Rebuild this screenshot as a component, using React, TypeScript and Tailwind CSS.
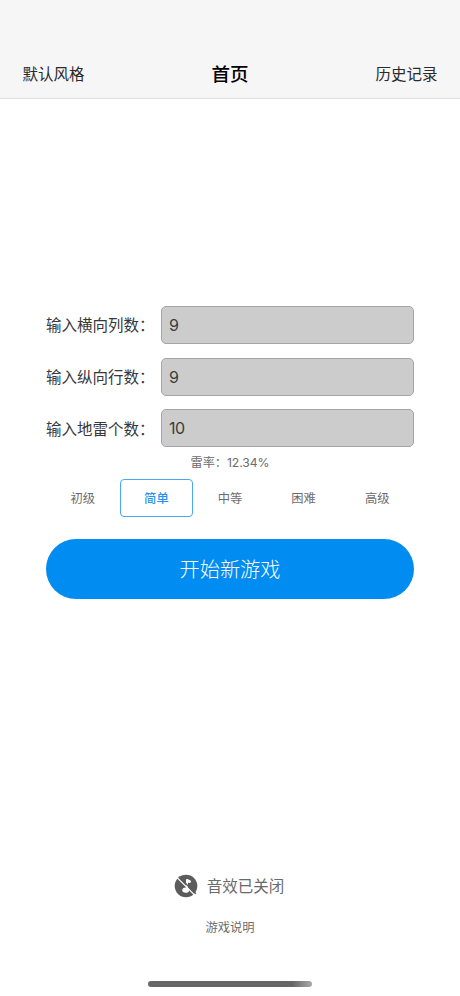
import { useState } from "react";

const levels = [
  { label: "初级", cols: 9, rows: 9, mines: 5 },
  { label: "简单", cols: 9, rows: 9, mines: 10 },
  { label: "中等", cols: 16, rows: 16, mines: 40 },
  { label: "困难", cols: 16, rows: 30, mines: 99 },
  { label: "高级", cols: 24, rows: 30, mines: 180 },
];

function Field({
  label,
  value,
  onChange,
}: {
  label: string;
  value: number;
  onChange: (value: number) => void;
}) {
  return (
    <label className="flex h-[38px] items-center">
      <span className="w-[115px] shrink-0 whitespace-nowrap pt-[2px] text-[15.5px] text-[#383838]">
        {label}
        <span>：</span>
      </span>
      <input
        inputMode="numeric"
        value={value}
        onChange={(e) => onChange(Number(e.target.value) || 0)}
        className="h-[38px] w-0 flex-1 rounded-[5px] border border-[#a5a5a5] bg-[#ccc] px-[7px] text-[16px] tracking-[-0.4px] text-[#3c3c3c] outline-none"
      />
    </label>
  );
}

function MutedIcon() {
  return (
    <svg viewBox="0 0 24 24" className="h-6 w-6">
      <circle cx="12" cy="12" r="11.3" fill="#5c5c5c" />
      <path d="M12 5.6q.4-1 1.4-.6l2.8 1.3q1.1.6.7 1.7t-1.7.9l-1.2-.3v5.6q1.5.6 1.3 2.2c-.3 1.6-1.7 2.3-3.6 2.3-2.1 0-3.5-.9-3.5-2.5 0-1.7 1.6-2.7 3.8-2.6z" fill="#fff" />
      <path d="M4.9 2.7l17 17" stroke="#5c5c5c" strokeWidth="1.4" />
      <path d="M3.4 3.9l17 17" stroke="#fff" strokeWidth="1.3" />
    </svg>
  );
}

export default function App() {
  const [active, setActive] = useState(1);
  const [cols, setCols] = useState(9);
  const [rows, setRows] = useState(9);
  const [mines, setMines] = useState(10);

  // truncated to two decimals, not rounded
  const total = cols * rows;
  const rate = total ? (Math.floor((mines / total) * 10000) / 100).toFixed(2) : "0.00";

  const pick = (i: number) => {
    setActive(i);
    setCols(levels[i].cols);
    setRows(levels[i].rows);
    setMines(levels[i].mines);
  };

  return (
    <div className="flex h-[996px] w-[460px] flex-col bg-white font-['Inter','Noto_Sans_CJK_SC',sans-serif]">
      <header className="flex h-[99px] shrink-0 items-end border-b border-[#dfdfdf] bg-[#f7f6f7] px-[22.5px]">
        <div className="grid h-[48px] w-full grid-cols-3 items-center pt-px">
          <button type="button" className="pt-px text-left text-[15.5px] text-[#2a2a2a]">默认风格</button>
          <h1 className="text-center text-[18.5px] font-medium text-black">首页</h1>
          <button type="button" className="pt-px text-right text-[15.5px] text-[#2a2a2a]">历史记录</button>
        </div>
      </header>

      <main className="flex flex-1 flex-col px-[46px] pt-[207px]">
        <div className="flex flex-col gap-[13.7px]">
          <Field label="输入横向列数" value={cols} onChange={setCols} />
          <Field label="输入纵向行数" value={rows} onChange={setRows} />
          <Field label="输入地雷个数" value={mines} onChange={setMines} />
        </div>

        <p className="mt-[7px] text-center text-[12.2px] leading-[18px] tracking-[-0.08px] text-[#6c6c6c]">雷率：{rate}%</p>

        <div className="mt-[7px] grid h-[38px] grid-cols-5">
          {levels.map((level, i) => (
            <button
              key={level.label}
              type="button"
              onClick={() => pick(i)}
              className={
                active === i
                  ? "rounded-[4px] border border-[#4aa8f3] pt-[2px] text-[12.3px] font-medium text-[#2394f0]"
                  : "rounded-[4px] border border-transparent pt-[2px] text-[12.3px] text-[#6c6c6c]"
              }
            >
              {level.label}
            </button>
          ))}
        </div>

        <button
          type="button"
          className="mt-[22px] h-[60px] shrink-0 rounded-full bg-[#018cf1] pt-px text-[20.2px] font-light text-white"
        >
          开始新游戏
        </button>
      </main>

      <footer className="flex flex-col items-center">
        <button type="button" className="flex h-6 -translate-x-px items-center gap-[9px] text-[15.5px] text-[#6a6a6a]">
          <MutedIcon />
          <span className="pt-[2px]">音效已关闭</span>
        </button>
        <button type="button" className="mt-[21px] text-[12.3px] leading-[18px] text-[#6c6c6c]">游戏说明</button>
        <div className="mt-[44px] mb-[9px] h-[6px] w-[164px] rounded-full bg-gradient-to-r from-[#666] from-88% to-[#aaa]" />
      </footer>
    </div>
  );
}
